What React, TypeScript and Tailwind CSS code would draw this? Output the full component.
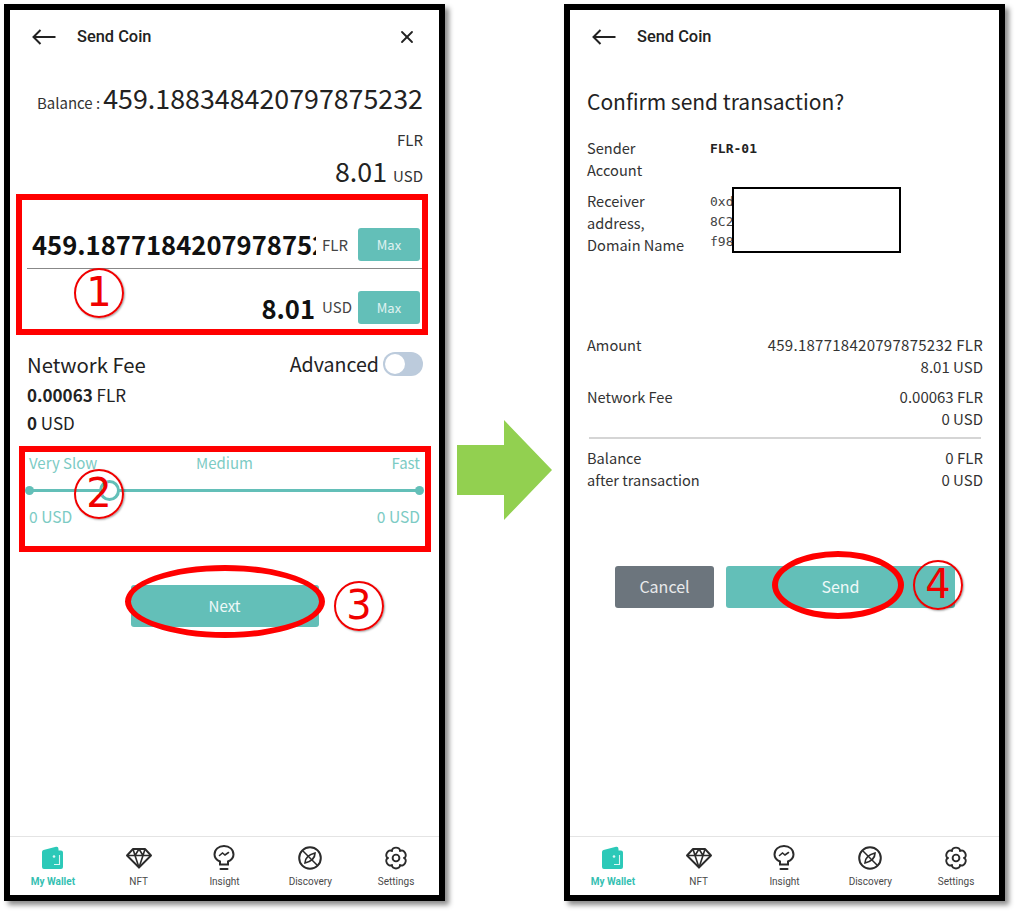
import React from 'react';
import { X } from 'lucide-react';

const sans = "font-['Noto_Sans_CJK_JP','Noto_Sans',sans-serif]";

const WalletIcon = () => (
  <svg width="23" height="24" viewBox="0 0 23 24">
    <path d="M1 6 Q1 4.5 2.5 4 L15 .8 Q17.5 .4 17.5 3 V4.5 H20 Q22 4.5 22 6.5 V21 Q22 23 20 23 H3 Q1 23 1 21 Z" fill="#2cc9b8" />
    <path d="M18.5 9 V18.5 H13" fill="none" stroke="#fff" strokeWidth="1.1" opacity="0.85" />
    <circle cx="13" cy="10.5" r="1.3" fill="#fff" opacity="0.85" />
  </svg>
);

const DiamondIcon = () => (
  <svg width="26" height="22" viewBox="0 0 26 22" fill="none" stroke="#2b2b2b" strokeWidth="1.9" strokeLinejoin="round">
    <path d="M7 2 H19 L25 8.5 L13 20.5 L1 8.5 Z" />
    <path d="M1 8.5 H25 M7 2 L9 8.5 L13 20.5 L17 8.5 L19 2 M9 8.5 L13 2 L17 8.5" strokeWidth="1.6" />
  </svg>
);

const BulbIcon = () => (
  <svg width="22" height="26" viewBox="0 0 22 26" fill="none" stroke="#2b2b2b" strokeWidth="2" strokeLinecap="round">
    <path d="M7 19.5 V16.5 C3.5 15 1.5 12.5 1.5 9.5 C1.5 4.5 5.5 1 11 1 C16.5 1 20.5 4.5 20.5 9.5 C20.5 12.5 18.5 15 15 16.5 V19.5 Z" />
    <path d="M7.5 24 H14.5" />
    <path d="M6.5 10.5 L9.5 8 L12 10 L15.5 7.5" strokeWidth="1.6" />
  </svg>
);

const CompassIcon = () => (
  <svg width="24" height="24" viewBox="0 0 24 24" fill="none" stroke="#2b2b2b" strokeWidth="2">
    <circle cx="12" cy="12" r="10.8" />
    <path d="M4.5 4.5 L19.5 19.5" strokeWidth="1.5" />
    <path d="M17 7 C17 11 15 15 7 17 C7 13 9 9 17 7 Z" strokeWidth="1.7" />
  </svg>
);

// six rounded lobes, worked out instead of typing twelve curves by hand
const gearPath = () => {
  const pt = (deg: number, r: number) => {
    const a = (deg * Math.PI) / 180;
    return `${(11 + r * Math.cos(a)).toFixed(2)} ${(12 + r * Math.sin(a)).toFixed(2)}`;
  };
  let d = `M${pt(-120, 8)}`;
  for (let i = 0; i < 6; i++) {
    const mid = -90 + i * 60;
    d += ` C${pt(mid - 22, 12.5)} ${pt(mid + 22, 12.5)} ${pt(mid + 30, 8)}`;
  }
  return d + ' Z';
};

const GearIcon = () => (
  <svg width="22" height="24" viewBox="0 0 22 24" fill="none" stroke="#2b2b2b" strokeWidth="1.9" strokeLinejoin="round">
    <path d={gearPath()} />
    <circle cx="11" cy="12" r="3.4" />
  </svg>
);

const BackArrow = () => (
  <svg width="24" height="16" viewBox="0 0 24 16" fill="none" stroke="#222" strokeWidth="2">
    <path d="M1.5 8 H23.5" />
    <path d="M8.5 1 L1.5 8 L8.5 15" />
  </svg>
);

const NavItem = ({ icon, label, active }: { icon: React.ReactNode; label: string; active?: boolean }) => (
  <div className="flex-1 flex flex-col items-center">
    <div className="h-[28px] flex items-center justify-center">{icon}</div>
    <span className={`mt-[3px] text-[10px] leading-[14px] font-['Roboto',sans-serif] ${active ? 'font-bold text-[#35c0b2]' : 'text-[#4a4a4a]'}`}>{label}</span>
  </div>
);

const BottomNav = () => (
  <div className="mt-auto h-[59px] pt-[7px] border-t border-[#e4e4e4] flex">
    <NavItem icon={<WalletIcon />} label="My Wallet" active />
    <NavItem icon={<DiamondIcon />} label="NFT" />
    <NavItem icon={<BulbIcon />} label="Insight" />
    <NavItem icon={<CompassIcon />} label="Discovery" />
    <NavItem icon={<GearIcon />} label="Settings" />
  </div>
);

const Header = ({ close }: { close?: boolean }) => (
  <div className="h-[52px] pt-[2px] pl-[22px] pr-[22px] flex items-center text-[#222]">
    <BackArrow />
    <span className="ml-[21px] text-[16.4px] font-medium font-['Roboto',sans-serif]">Send Coin</span>
    {close && <X size={20} strokeWidth={2.2} className="ml-auto" />}
  </div>
);

const MaxButton = () => (
  <div className="w-[62px] h-[33px] rounded-[3px] bg-[#63bfb8] text-white/80 text-[13px] flex items-center justify-center">Max</div>
);

const Phone = ({ children }: { children: React.ReactNode }) => (
  <div className={`w-[441px] h-[897px] shrink-0 border-[6px] border-black bg-white flex flex-col shadow-[4px_4px_5px_rgba(0,0,0,0.45)] ${sans}`}>
    {children}
  </div>
);

const SendForm = () => (
  <Phone>
    <Header close />
    <div className="mt-[20px] px-[16px] flex justify-end items-baseline text-[#222]">
      <span className="text-[15px] text-[#333] mr-[3px]">Balance :</span>
      <span className="text-[26.8px] leading-[32px]">459.188348420797875232</span>
    </div>
    <div className="mt-[15px] pr-[16px] text-right text-[15px] leading-[20px] text-[#333]">FLR</div>
    <div className="mt-[5px] pr-[16px] flex justify-end items-baseline text-[#222]">
      <span className="text-[26.8px] leading-[32px]">8.01</span>
      <span className="ml-[6px] text-[15px] text-[#333]">USD</span>
    </div>

    {/* amount inputs */}
    <div className="mt-[18px] px-[17px]">
      <div className="h-[64px] flex items-end border-b border-[#888] pb-[7px]">
        <div className="w-[289px] pl-[5px] overflow-hidden whitespace-nowrap text-[25.6px] leading-[34px] font-bold text-[#111]">459.187718420797875232</div>
        <span className="ml-[6px] mb-[4px] text-[15px] leading-[24px] text-[#444]">FLR</span>
        <div className="ml-auto mr-[2px]"><MaxButton /></div>
      </div>
      <div className="mt-[22px] h-[33px] flex items-center justify-end">
        <span className="text-[25.6px] leading-[36px] font-bold text-[#111]">8.01</span>
        <span className="ml-[7px] text-[15px] text-[#444]">USD</span>
        <div className="ml-[6px] mr-[2px]"><MaxButton /></div>
      </div>
    </div>

    {/* fee */}
    <div className="mt-[27px] pl-[17px] pr-[16px] flex justify-between items-center">
      <span className="text-[20.3px] leading-[26px] text-[#222]">Network Fee</span>
      <div className="flex items-center">
        <span className="text-[19.6px] leading-[26px] text-[#222]">Advanced</span>
        <div className="ml-[4px] w-[40px] h-[24px] rounded-full bg-[#bccbdc] p-[2px]">
          <div className="w-[20px] h-[20px] rounded-full bg-white" />
        </div>
      </div>
    </div>
    <div className="mt-[6px] pl-[17px] text-[17px] leading-[24px] text-[#222]"><b>0.00063</b> FLR</div>
    <div className="mt-[4px] pl-[17px] text-[17px] leading-[24px] text-[#222]"><b>0</b> USD</div>

    {/* speed slider */}
    <div className="mt-[17px] px-[19px] text-[#7ccbc4]">
      <div className="grid grid-cols-3 text-[15px] leading-[22px]">
        <span>Very Slow</span><span className="text-center">Medium</span><span className="text-right">Fast</span>
      </div>
      <div className="relative mt-[15px] h-[3px] bg-[#63bfb8] rounded-full">
        <div className="absolute left-[-4px] top-[-3px] w-[9px] h-[9px] rounded-full bg-[#63bfb8]" />
        <div className="absolute right-[-4px] top-[-3px] w-[9px] h-[9px] rounded-full bg-[#63bfb8]" />
        <div className="absolute left-[70px] top-[-9px] w-[21px] h-[21px] rounded-full border-[3px] border-[#63bfb8] bg-white" />
      </div>
      <div className="mt-[13px] flex justify-between text-[15.6px] leading-[22px]">
        <span>0 USD</span><span>0 USD</span>
      </div>
    </div>

    <div className="mt-[58px] flex justify-center">
      <div className="w-[188px] h-[42px] rounded-[3px] bg-[#63bfb8] text-white/90 text-[15px] flex items-center justify-center">Next</div>
    </div>
    <BottomNav />
  </Phone>
);

const Row = ({ label, values, wide }: { label: string[]; values: string[]; wide?: boolean }) => (
  <div className="flex justify-between text-[14.6px] leading-[22px] text-[#333]">
    <div>{label.map(l => <div key={l}>{l}</div>)}</div>
    <div className="text-right text-[15px]">
      {values.map((v, i) => <div key={v} className={wide && i === 0 ? 'tracking-[0.27px]' : ''}>{v}</div>)}
    </div>
  </div>
);

const Confirm = () => (
  <Phone>
    <Header />
    <div className="px-[17px] pr-[16px]">
      <div className="mt-[25px] text-[21px] leading-[28px] text-[#222]">Confirm send transaction?</div>
      <div className="mt-[22px] flex text-[14.6px] leading-[22px] text-[#333]">
        <div className="w-[123px]">Sender<br />Account</div>
        <div className="mt-[1px] font-['DejaVu_Sans_Mono',monospace] font-bold text-[13px] text-[#222]">FLR-01</div>
      </div>
      <div className="relative mt-[9px] flex text-[14.6px] leading-[22px] text-[#333]">
        <div className="w-[123px]">Receiver<br />address,<br />Domain Name</div>
        <div className="mt-[2px] font-['DejaVu_Sans_Mono',monospace] text-[13px] leading-[20px] text-[#444]">0xd<br />8C2<br />f98</div>
        <div className="absolute left-[145px] top-[-3px] w-[169px] h-[66px] border-2 border-black bg-white" />
      </div>
      <div className="mt-[78px]"><Row label={['Amount']} values={['459.187718420797875232 FLR', '8.01 USD']} wide /></div>
      <div className="mt-[8px]"><Row label={['Network Fee']} values={['0.00063 FLR', '0 USD']} /></div>
      <div className="mt-[7px] mx-[2px] h-[2px] bg-[#d5d5d5]" />
      <div className="mt-[8px]"><Row label={['Balance', 'after transaction']} values={['0 FLR', '0 USD']} /></div>
      <div className="mt-[75px] ml-[28px] flex gap-[12px]">
        <div className="w-[99px] h-[42px] rounded-[3px] bg-[#6c757d] text-white/85 text-[16px] pb-[2px] flex items-center justify-center">Cancel</div>
        <div className="w-[229px] h-[42px] rounded-[3px] bg-[#63bfb8] text-white/90 text-[16px] pb-[2px] flex items-center justify-center">Send</div>
      </div>
    </div>
    <BottomNav />
  </Phone>
);

const Badge = ({ n, className }: { n: string; className: string }) => (
  <div className={`absolute w-[50px] h-[50px] rounded-full border-2 border-[#f00000] bg-transparent text-[#f00000] text-[40px] leading-[45px] text-center font-['DejaVu_Sans',sans-serif] shadow-[1px_1px_2px_rgba(0,0,0,0.35)] ${className}`}>{n}</div>
);

export default function App() {
  return (
    <div className="relative w-[1018px] h-[913px] bg-white overflow-hidden pl-[4px] pt-[4px] flex items-start">
      <SendForm />
      <div className="w-[119px] shrink-0 self-stretch flex items-center justify-center">
        <svg width="95" height="100" viewBox="0 0 95 100" className="mt-[23px]">
          <path d="M0 25 H47 V0 L95 50 L47 100 V75 H0 Z" fill="#92d050" />
        </svg>
      </div>
      <Confirm />

      {/* red annotations */}
      <div className="absolute left-[16px] top-[194px] w-[412px] h-[141px] border-[6px] border-[#ff0000]" />
      <div className="absolute left-[19px] top-[446px] w-[412px] h-[106px] border-[6px] border-[#ff0000]" />
      <div className="absolute left-[125px] top-[565px] w-[200px] h-[73px] rounded-[50%] border-[6px] border-[#ff0000]" />
      <div className="absolute left-[772px] top-[551px] w-[132px] h-[68px] rounded-[50%] border-[6px] border-[#ff0000]" />
      <Badge n="1" className="left-[74px] top-[268px]" />
      <Badge n="2" className="left-[74px] top-[469px]" />
      <Badge n="3" className="left-[334px] top-[581px]" />
      <Badge n="4" className="left-[913px] top-[560px]" />
    </div>
  );
}
